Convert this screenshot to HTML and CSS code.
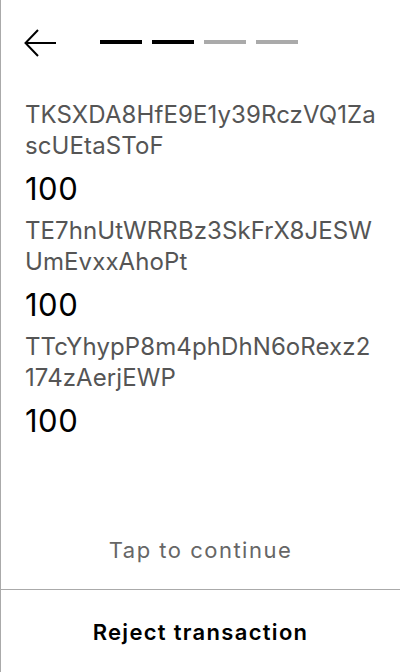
FILE: index.html
```html
<!DOCTYPE html>
<html>
<head>
<meta charset="utf-8">
<link rel="stylesheet" href="styles.css">
</head>
<body>
<div class="screen">
  <header class="header">
    <svg class="back" width="32" height="32" viewBox="0 0 32 32" fill="none" stroke="#000" stroke-width="2">
      <path d="M1.5 16H32M14 3L1.5 16L14 29"/>
    </svg>
    <div class="progress">
      <span class="dash on"></span>
      <span class="dash on"></span>
      <span class="dash"></span>
      <span class="dash"></span>
    </div>
  </header>
  <main class="content">
    <div class="item">
      <div class="addr">TKSXDA8HfE9E1y39RczVQ1Za<br>scUEtaSToF</div>
      <div class="amount">100</div>
    </div>
    <div class="item">
      <div class="addr">TE7hnUtWRRBz3SkFrX8JESW<br>UmEvxxAhoPt</div>
      <div class="amount">100</div>
    </div>
    <div class="item">
      <div class="addr">TTcYhypP8m4phDhN6oRexz2<br>174zAerjEWP</div>
      <div class="amount">100</div>
    </div>
  </main>
  <div class="tap">Tap to continue</div>
  <div class="reject">Reject transaction</div>
</div>
</body>
</html>
```

FILE: styles.css
```css
html, body {
  margin: 0;
  padding: 0;
  background: #fff;
}
body {
  font-family: Inter, "Noto Sans", sans-serif;
}
.screen {
  box-sizing: border-box;
  height: 672px;
  border-left: 1px solid #aaaaaa;
  display: flex;
  flex-direction: column;
}
.header {
  display: flex;
  align-items: center;
  padding: 27px 23px 0;
  height: 32px;
}
.back {
  display: block;
  flex: none;
}
.progress {
  display: flex;
  gap: 10px;
  margin-left: 44px;
  margin-top: -2px;
}
.dash {
  width: 42px;
  height: 4px;
  background: #aaaaaa;
}
.dash.on {
  background: #000;
}
.content {
  flex: 1;
  padding: 40px 24px 0;
}
.addr {
  font-size: 24px;
  line-height: 31px;
  letter-spacing: 0.1px;
  color: #555555;
  margin-bottom: 10px;
  white-space: nowrap;
}
.amount {
  font-size: 31px;
  line-height: 36px;
  letter-spacing: 0.5px;
  color: #000;
  margin-bottom: 8px;
}
.tap {
  box-sizing: border-box;
  height: 80px;
  padding-top: 1px;
  display: flex;
  align-items: center;
  justify-content: center;
  font-size: 22px;
  letter-spacing: 1.5px;
  color: #666666;
}
.reject {
  height: 83px;
  border-top: 1px solid #aaaaaa;
  display: flex;
  align-items: center;
  justify-content: center;
  font-size: 22px;
  font-weight: 600;
  letter-spacing: 1.3px;
  color: #000;
  padding-top: 1px;
  box-sizing: border-box;
}
```
